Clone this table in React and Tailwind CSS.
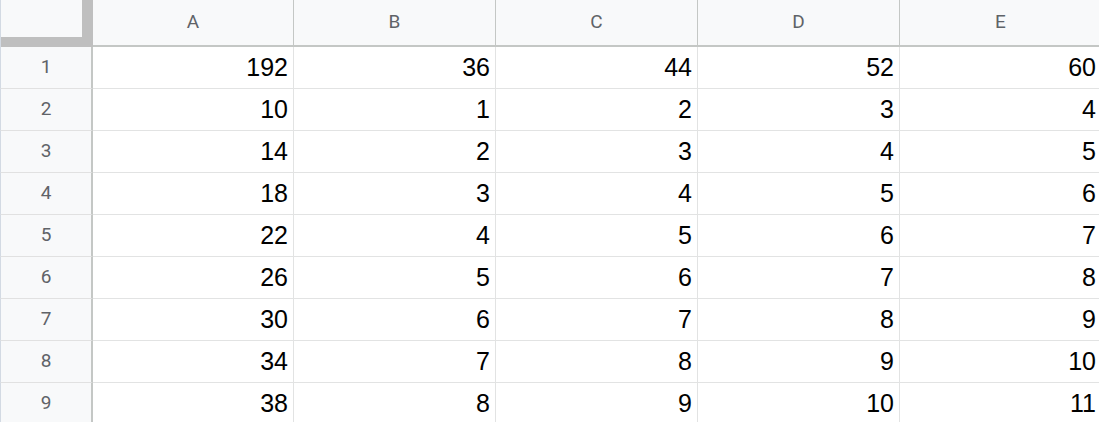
import React from "react";

const cols = ["A", "B", "C", "D", "E"];
const rows = [
  [192, 36, 44, 52, 60],
  [10, 1, 2, 3, 4],
  [14, 2, 3, 4, 5],
  [18, 3, 4, 5, 6],
  [22, 4, 5, 6, 7],
  [26, 5, 6, 7, 8],
  [30, 6, 7, 8, 9],
  [34, 7, 8, 9, 10],
  [38, 8, 9, 10, 11],
];

export default function App() {
  return (
    <div className="w-[1099px] h-[422px] overflow-hidden bg-white">
      <div className="grid grid-cols-[93px_201px_repeat(4,202px)] w-[1102px]">
        {/* corner */}
        <div className="h-[47px] bg-[#bfbfbf] border-l border-[#d3dae3]">
          <div className="w-[81px] h-[37px] bg-[#f8f9fa]" />
        </div>
        {cols.map((c) => (
          <div
            key={c}
            className="h-[47px] bg-[#f8f9fa] border-r border-r-[#c4c7c5] border-b-2 border-b-[#c4c7c5] flex items-center justify-center text-[19px] text-[#5f6368]"
            style={{ fontFamily: "Roboto, sans-serif" }}
          >
            {c}
          </div>
        ))}
        {rows.map((r, i) => (
          <React.Fragment key={i}>
            <div
              className="h-[42px] bg-[#f8f9fa] border-r-2 border-r-[#c4c7c5] border-b border-b-[#e1e1e1] border-l border-l-[#d3dae3] flex items-center justify-center text-[19px] text-[#5f6368]"
              style={{ fontFamily: "Roboto, sans-serif" }}
            >
              {i + 1}
            </div>
            {r.map((v, j) => (
              <div
                key={j}
                className="h-[42px] border-r border-b border-[#e2e3e3] flex items-center justify-end pr-[5px] text-[25px] text-black"
                style={{ fontFamily: '"Liberation Sans", Arial, sans-serif' }}
              >
                {v}
              </div>
            ))}
          </React.Fragment>
        ))}
      </div>
    </div>
  );
}
